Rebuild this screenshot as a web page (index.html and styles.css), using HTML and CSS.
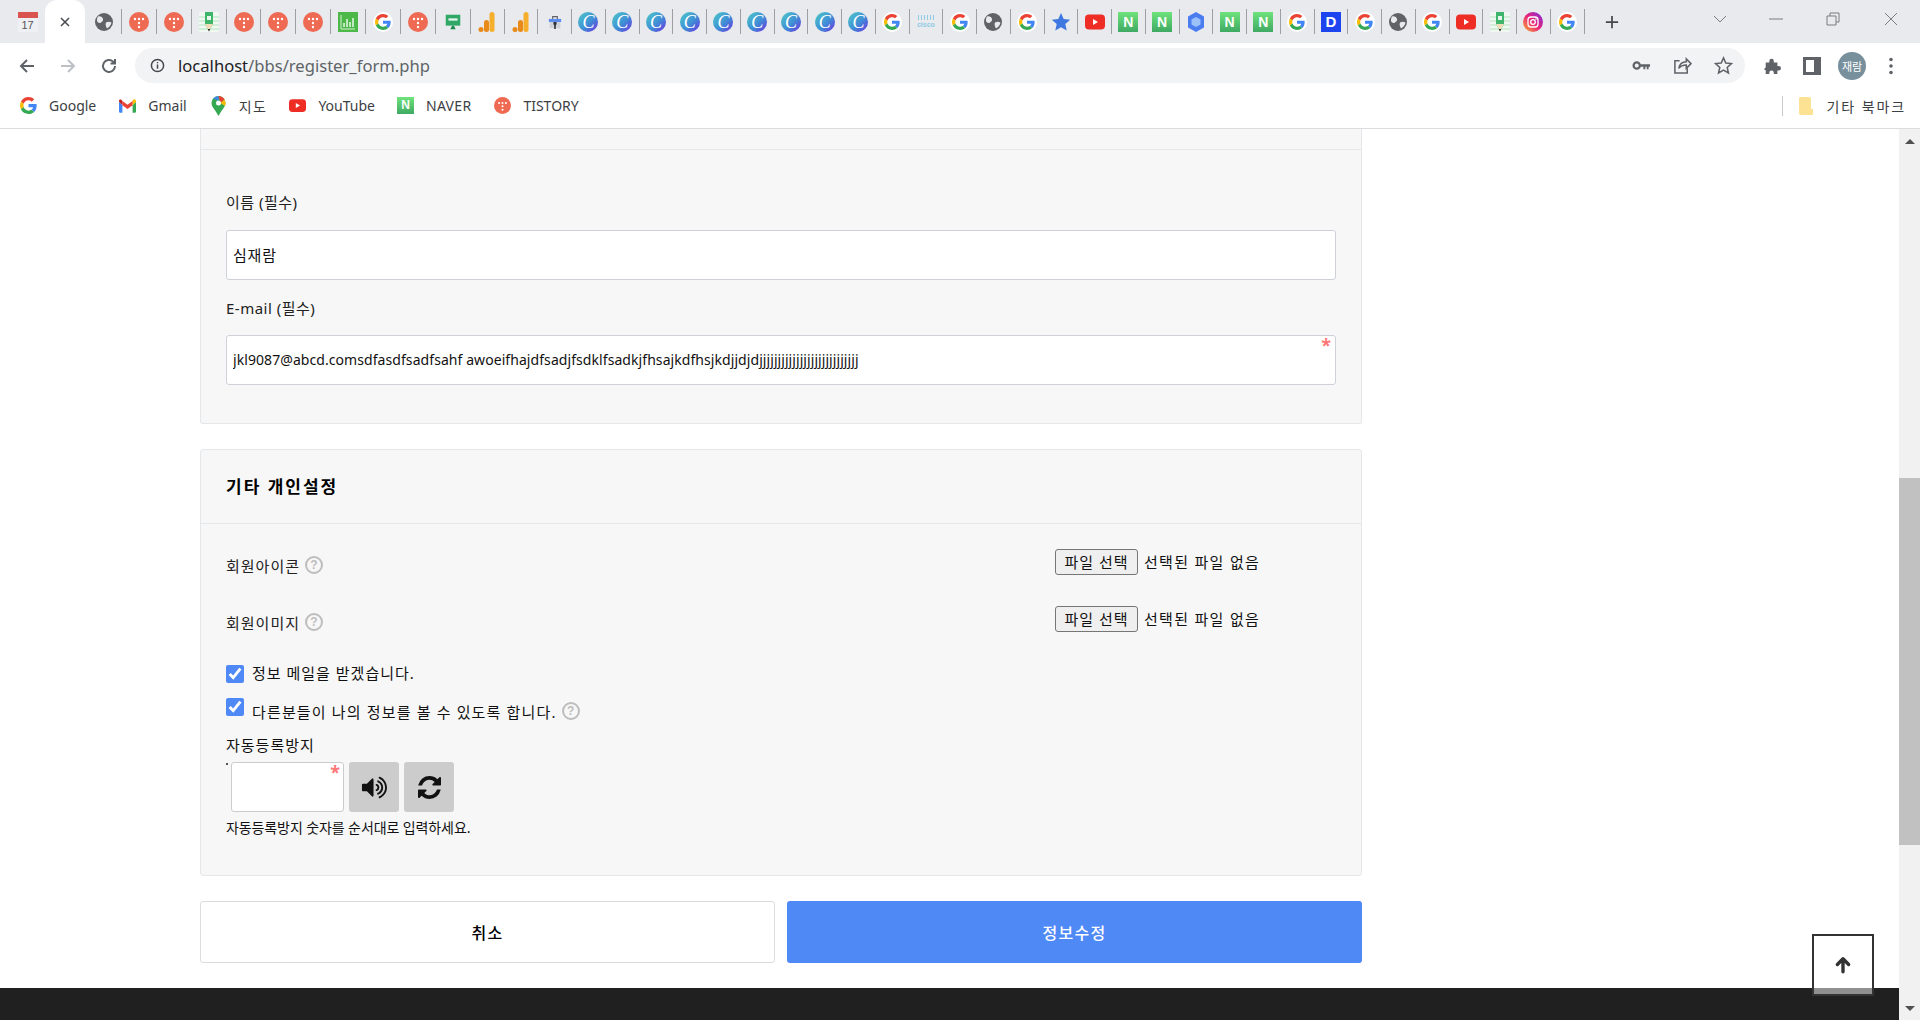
FILE: index.html
```html
<!DOCTYPE html>
<html lang="ko">
<head>
    <meta charset="UTF-8">
    <meta name="viewport" content="width=device-width, initial-scale=1.0">
    <title>회원 정보 수정</title>
    <link rel="stylesheet" href="styles.css">
</head>
<body>
    <!-- favicon and toolbar icon set -->
    <svg class="sprite" xmlns="http://www.w3.org/2000/svg">
        <defs>
            <linearGradient id="g-insta" x1="0" y1="1" x2="1" y2="0"><stop offset="0" stop-color="#fdb32b"/><stop offset=".5" stop-color="#e8247c"/><stop offset="1" stop-color="#7a2ee0"/></linearGradient>
        </defs>
        <symbol id="i-g" viewBox="-6 -6 60 60"><circle cx="24" cy="24" r="30" fill="#fff"/><path fill="#EA4335" d="M24 9.5c3.54 0 6.71 1.22 9.21 3.6l6.85-6.85C35.9 2.38 30.47 0 24 0 14.62 0 6.51 5.38 2.56 13.22l7.98 6.19C12.43 13.72 17.74 9.5 24 9.5z"/><path fill="#4285F4" d="M46.98 24.55c0-1.57-.15-3.09-.38-4.55H24v9.02h12.94c-.58 2.96-2.26 5.48-4.78 7.18l7.73 6c4.51-4.18 7.09-10.36 7.09-17.65z"/><path fill="#FBBC05" d="M10.53 28.59c-.5-1.45-.78-2.99-.78-4.59s.27-3.14.78-4.59l-7.98-6.19C.92 16.46 0 20.12 0 24c0 3.88.92 7.54 2.56 10.78l7.97-6.19z"/><path fill="#34A853" d="M24 48c6.48 0 11.93-2.13 16.01-5.81l-7.73-6c-2.15 1.45-4.92 2.3-8.28 2.3-6.26 0-11.57-4.22-13.47-9.91l-7.98 6.19C6.51 42.62 14.62 48 24 48z"/></symbol>
        <symbol id="i-g-plain" viewBox="0 0 48 48"><path fill="#EA4335" d="M24 9.5c3.54 0 6.71 1.22 9.21 3.6l6.85-6.85C35.9 2.38 30.47 0 24 0 14.62 0 6.51 5.38 2.56 13.22l7.98 6.19C12.43 13.72 17.74 9.5 24 9.5z"/><path fill="#4285F4" d="M46.98 24.55c0-1.57-.15-3.09-.38-4.55H24v9.02h12.94c-.58 2.96-2.26 5.48-4.78 7.18l7.73 6c4.51-4.18 7.09-10.36 7.09-17.65z"/><path fill="#FBBC05" d="M10.53 28.59c-.5-1.45-.78-2.99-.78-4.59s.27-3.14.78-4.59l-7.98-6.19C.92 16.46 0 20.12 0 24c0 3.88.92 7.54 2.56 10.78l7.97-6.19z"/><path fill="#34A853" d="M24 48c6.48 0 11.93-2.13 16.01-5.81l-7.73-6c-2.15 1.45-4.92 2.3-8.28 2.3-6.26 0-11.57-4.22-13.47-9.91l-7.98 6.19C6.51 42.62 14.62 48 24 48z"/></symbol>
        <symbol id="i-t" viewBox="0 0 20 20"><circle cx="10" cy="10" r="10" fill="#ef6a53"/><g fill="#fff"><circle cx="6" cy="7" r="1.2"/><circle cx="10" cy="7" r="1.2"/><circle cx="14" cy="7" r="1.2"/><circle cx="10" cy="11" r="1.2"/><circle cx="10" cy="15" r="1.2"/></g></symbol>
        <symbol id="i-globe" viewBox="0 0 20 20"><circle cx="10" cy="10" r="9" fill="#5f6368"/><path fill="#e8eaed" d="M4 4.500c2.500-.5 4.500.5 5 2.500s-1 2.500-2 3.500-2.500.5-3.500-.5-.5-4 .5-5.500zm8 6c2-1 3.500-1 5.500 0-.5 2.500-2 4.500-4.500 6-1-2-2-4-1-6z"/></symbol>
        <symbol id="i-pencil" viewBox="0 0 20 20"><rect width="20" height="20" rx="2" fill="#f1f8f1"/><path d="M0 5h20M0 9h20M0 13h20M0 17h20" stroke="#c6eccf" stroke-width="1.5"/><path d="M6 0h8v12l-4 7-4-7z" fill="#3fb56b"/><rect x="8" y="4" width="4" height="4" fill="#e8f7ec"/><path d="M6 12h8l-4 7z" fill="#f3dcb8"/><path d="M8.8 17h2.4L10 19.5z" fill="#222"/></symbol>
        <symbol id="i-chart" viewBox="0 0 20 20"><rect width="20" height="20" fill="#4cb848"/><path d="M3 3v14h14" fill="none" stroke="#d4f0d2" stroke-width="1"/><path d="M6 15v-4M9 15V7M12 15v-5M15 15V6" stroke="#e8f7e7" stroke-width="1.5"/></symbol>
        <symbol id="i-monitor" viewBox="-1 -1 22 22"><rect x="2" y="2" width="16" height="12" fill="#2fa866"/><rect x="5" y="6" width="10" height="2.5" fill="#e6f6ec"/><path d="M7 18l2-4h2l2 4z" fill="#1f8a50"/></symbol>
        <symbol id="i-analytics" viewBox="0 0 20 20"><rect x="12.500" y="0" width="5" height="20" rx="2.500" fill="#f6ae2d"/><rect x="7" y="8" width="5" height="12" rx="2.500" fill="#e88a1a"/><circle cx="4" cy="17.500" r="2.500" fill="#e88a1a"/></symbol>
        <symbol id="i-toolbox" viewBox="-3 -3 26 26"><path d="M7 6V3h6v3" fill="none" stroke="#5f6368" stroke-width="1.5"/><rect x="2" y="6" width="16" height="4" fill="#5b8def"/><rect x="3" y="10" width="14" height="8" fill="#cfd3d8"/><path d="M8 10v3l2 2 2-2v-3" fill="#2b2f36"/><path d="M10 14v5" stroke="#2b2f36" stroke-width="2"/></symbol>
        <symbol id="i-star" viewBox="0 0 20 20"><path d="M10 1l2.700 6 6.500.7-4.900 4.400 1.400 6.400L10 15.200l-5.700 3.300 1.400-6.400L.8 7.700l6.500-.7z" fill="#3f78e0"/></symbol>
        <symbol id="i-yt" viewBox="0 0 20 20"><rect y="2.500" width="20" height="15" rx="4" fill="#ee2d24"/><path d="M8 7l5 3-5 3z" fill="#fff"/></symbol>
        <symbol id="i-hex" viewBox="0 0 20 20"><path d="M10 0l8 4.500v11L10 20l-8-4.500v-11z" fill="#4c7df0"/><path d="M10 5l4.500 2.500v5L10 15l-4.500-2.500v-5z" fill="#9cc0f8"/></symbol>
        <symbol id="i-insta" viewBox="0 0 20 20"><circle cx="10" cy="10" r="10" fill="url(#g-insta)"/><rect x="5" y="5" width="10" height="10" rx="3" fill="none" stroke="#fff" stroke-width="1.300"/><circle cx="10" cy="10" r="2.300" fill="none" stroke="#fff" stroke-width="1.300"/><circle cx="13" cy="7" r=".8" fill="#fff"/></symbol>
        <symbol id="i-gmail" viewBox="0 0 20 16"><path d="M0 3v11.500A1.500 1.500 0 0 0 1.500 16H4V7z" fill="#4285f4"/><path d="M16 7v9h2.500a1.500 1.500 0 0 0 1.500-1.500V3z" fill="#34a853"/><path d="M16 1v6l4-4V2c0-1.500-2-2.500-3-1.500z" fill="#fbbc04"/><path d="M4 7V2l6 4.500L16 2v5l-6 4.500z" fill="#ea4335"/><path d="M0 2v1l4 4V2L3 1C2 0 0 .5 0 2z" fill="#c5221f"/></symbol>
        <symbol id="i-maps" viewBox="0 0 14 20"><path d="M7 0a7 7 0 0 1 7 7c0 4-4 7-7 13C4 14 0 11 0 7a7 7 0 0 1 7-7z" fill="#34a853"/><path d="M2 2.500A7 7 0 0 1 7 0v5z" fill="#4285f4"/><path d="M7 0a7 7 0 0 1 6 3.500L9 7z" fill="#ea4335"/><path d="M13 3.500A7 7 0 0 1 13.500 10L9 7z" fill="#fbbc04"/><circle cx="7" cy="7" r="2.500" fill="#fff"/></symbol>
    </svg>

    <header class="browser">
        <div class="tabstrip">
            <div class="tab tab-pinned"><span class="fav fav-cal">17</span></div>
            <div class="tab-active">
                <svg class="tab-close" viewBox="0 0 12 12"><path d="M2 2l8 8M10 2l-8 8"/></svg>
            </div>
            <div class="tab"><svg class="fav"><use href="#i-globe"/></svg></div>
            <div class="tab"><svg class="fav"><use href="#i-t"/></svg></div>
            <div class="tab"><svg class="fav"><use href="#i-t"/></svg></div>
            <div class="tab"><svg class="fav"><use href="#i-pencil"/></svg></div>
            <div class="tab"><svg class="fav"><use href="#i-t"/></svg></div>
            <div class="tab"><svg class="fav"><use href="#i-t"/></svg></div>
            <div class="tab"><svg class="fav"><use href="#i-t"/></svg></div>
            <div class="tab"><svg class="fav"><use href="#i-chart"/></svg></div>
            <div class="tab"><svg class="fav"><use href="#i-g"/></svg></div>
            <div class="tab"><svg class="fav"><use href="#i-t"/></svg></div>
            <div class="tab"><svg class="fav"><use href="#i-monitor"/></svg></div>
            <div class="tab"><svg class="fav"><use href="#i-analytics"/></svg></div>
            <div class="tab"><svg class="fav"><use href="#i-analytics"/></svg></div>
            <div class="tab"><svg class="fav"><use href="#i-toolbox"/></svg></div>
            <div class="tab"><span class="fav fav-c">C</span></div>
            <div class="tab"><span class="fav fav-c">C</span></div>
            <div class="tab"><span class="fav fav-c">C</span></div>
            <div class="tab"><span class="fav fav-c">C</span></div>
            <div class="tab"><span class="fav fav-c">C</span></div>
            <div class="tab"><span class="fav fav-c">C</span></div>
            <div class="tab"><span class="fav fav-c">C</span></div>
            <div class="tab"><span class="fav fav-c">C</span></div>
            <div class="tab"><span class="fav fav-c">C</span></div>
            <div class="tab"><svg class="fav"><use href="#i-g"/></svg></div>
            <div class="tab"><span class="fav fav-cisco">cisco</span></div>
            <div class="tab"><svg class="fav"><use href="#i-g"/></svg></div>
            <div class="tab"><svg class="fav"><use href="#i-globe"/></svg></div>
            <div class="tab"><svg class="fav"><use href="#i-g"/></svg></div>
            <div class="tab"><svg class="fav"><use href="#i-star"/></svg></div>
            <div class="tab"><svg class="fav"><use href="#i-yt"/></svg></div>
            <div class="tab"><span class="fav fav-n">N</span></div>
            <div class="tab"><span class="fav fav-n">N</span></div>
            <div class="tab"><svg class="fav"><use href="#i-hex"/></svg></div>
            <div class="tab"><span class="fav fav-n">N</span></div>
            <div class="tab"><span class="fav fav-n">N</span></div>
            <div class="tab"><svg class="fav"><use href="#i-g"/></svg></div>
            <div class="tab"><span class="fav fav-d">D</span></div>
            <div class="tab"><svg class="fav"><use href="#i-g"/></svg></div>
            <div class="tab"><svg class="fav"><use href="#i-globe"/></svg></div>
            <div class="tab"><svg class="fav"><use href="#i-g"/></svg></div>
            <div class="tab"><svg class="fav"><use href="#i-yt"/></svg></div>
            <div class="tab"><svg class="fav"><use href="#i-pencil"/></svg></div>
            <div class="tab"><svg class="fav"><use href="#i-insta"/></svg></div>
            <div class="tab"><svg class="fav"><use href="#i-g"/></svg></div>
            <svg class="new-tab" viewBox="0 0 16 16"><path d="M8 1v14M1 8h14"/></svg>
            <div class="window-controls">
                <svg class="win-icon win-chevron" viewBox="0 0 14 8"><path d="M1 1l6 6 6-6"/></svg>
                <svg class="win-icon win-min" viewBox="0 0 14 14"><path d="M0 7h14"/></svg>
                <svg class="win-icon win-restore" viewBox="0 0 14 14"><path d="M1 4h9v9H1zM4 4V1h9v9h-3"/></svg>
                <svg class="win-icon win-x" viewBox="0 0 14 14"><path d="M1 1l12 12M13 1L1 13"/></svg>
            </div>
        </div>

        <div class="toolbar">
            <svg class="nav-icon" viewBox="0 0 18 18"><path d="M16 9H3M9 3L3 9l6 6"/></svg>
            <svg class="nav-icon nav-disabled" viewBox="0 0 18 18"><path d="M2 9h13M9 3l6 6-6 6"/></svg>
            <svg class="nav-icon" viewBox="0 0 18 18"><path d="M15 9a6 6 0 1 1-1.800-4.300L15 6.500M15 2v4.500h-4.500"/></svg>
            <div class="omnibox">
                <svg class="info-icon" viewBox="0 0 16 16"><circle cx="8" cy="8" r="6.500"/><path d="M8 7v4.500M8 4.200v1.400"/></svg>
                <span class="url"><span class="url-host">localhost</span>/bbs/register_form.php</span>
                <div class="omnibox-actions">
                    <svg class="omni-icon" viewBox="0 0 20 12"><circle cx="5" cy="6" r="3.300" fill="none" stroke="#5f6368" stroke-width="2.400"/><path d="M9 4.800h10v2.500h-1.500V10h-2V7.300h-1.500V10h-2V7.300H9z" fill="#5f6368"/></svg>
                    <svg class="omni-icon omni-line" viewBox="0 0 20 20"><path d="M7 5H2v13h13v-5"/><path d="M6 13c1-5 4-7 8-7V3l5 5-5 5V9.500c-3 0-6 1-8 3.500z"/></svg>
                    <svg class="omni-icon omni-line" viewBox="0 0 20 20"><path d="M10 2l2.400 5.400 5.900.6-4.400 4 1.300 5.800L10 14.800l-5.200 3 1.300-5.800-4.400-4 5.900-.6z"/></svg>
                </div>
            </div>
            <svg class="tool-icon tool-puzzle" viewBox="0 0 20 20"><path d="M3 6h4V4.500a2.500 2.500 0 0 1 5 0V6h4v4h1.500a2.500 2.500 0 0 1 0 5H16v4h-4v-1.500a2.500 2.500 0 0 0-5 0V19H3v-4.500H1.500V14a2.500 2.500 0 0 1 2-2.500H3z" fill="#5f6368"/></svg>
            <svg class="tool-icon tool-panel" viewBox="0 0 18 18"><rect x="1.500" y="1.500" width="15" height="15" fill="none" stroke="#5f6368" stroke-width="3"/><rect x="11" y="1" width="6" height="16" fill="#5f6368"/></svg>
            <div class="avatar">재람</div>
            <svg class="tool-icon tool-kebab" viewBox="0 0 4 18"><circle cx="2" cy="2.500" r="1.800"/><circle cx="2" cy="9" r="1.800"/><circle cx="2" cy="15.500" r="1.800"/></svg>
        </div>

        <div class="bookmarks">
            <a class="bookmark"><svg class="bm-icon"><use href="#i-g-plain"/></svg>Google</a>
            <a class="bookmark"><svg class="bm-icon bm-gmail"><use href="#i-gmail"/></svg>Gmail</a>
            <a class="bookmark bm-item-maps"><svg class="bm-icon bm-maps"><use href="#i-maps"/></svg>지도</a>
            <a class="bookmark bm-item-yt"><svg class="bm-icon"><use href="#i-yt"/></svg>YouTube</a>
            <a class="bookmark bm-item-naver"><span class="fav-n bm-n">N</span><span class="bm-naver">NAVER</span></a>
            <a class="bookmark"><svg class="bm-icon"><use href="#i-t"/></svg>TISTORY</a>
            <div class="other-bookmarks">
                <svg class="bm-folder" viewBox="0 0 14 18"><path d="M1 0h9a2 2 0 0 1 2 2v10h2v6H2a2 2 0 0 1-2-2V1z" fill="#fde293"/></svg>
                <span class="other-label">기타 북마크</span>
            </div>
        </div>
    </header>

    <div class="viewport">
        <main class="page">
            <div class="wrap">
                <section class="panel panel-clipped">
                    <div class="panel-head panel-head-cut"></div>
                    <div class="panel-body">
                        <label class="field-label">이름 (필수)</label>
                        <input class="text-input text-input-name" type="text" value="심재람">
                        <label class="field-label field-label-next">E-mail (필수)</label>
                        <div class="required">
                            <input class="text-input text-input-mail" type="text" value="jkl9087@abcd.comsdfasdfsadfsahf awoeifhajdfsadjfsdklfsadkjfhsajkdfhsjkdjjdjdjjjjjjjjjjjjjjjjjjjjjjjjjjj">
                        </div>
                    </div>
                </section>

                <section class="panel panel-settings">
                    <div class="panel-head"><h2>기타 개인설정</h2></div>
                    <div class="settings-body">
                        <div class="file-row">
                            <span class="file-label">회원아이콘 <span class="help">?</span></span>
                            <span class="file-pick"><button class="file-btn" type="button">파일 선택</button><span class="file-none">선택된 파일 없음</span></span>
                        </div>
                        <div class="file-row">
                            <span class="file-label">회원이미지 <span class="help">?</span></span>
                            <span class="file-pick"><button class="file-btn" type="button">파일 선택</button><span class="file-none">선택된 파일 없음</span></span>
                        </div>
                        <label class="check-row check-first">
                            <input type="checkbox" checked>
                            <span>정보 메일을 받겠습니다.</span>
                        </label>
                        <label class="check-row check-second">
                            <input type="checkbox" checked>
                            <span>다른분들이 나의 정보를 볼 수 있도록 합니다.</span>
                            <span class="help">?</span>
                        </label>
                        <div class="captcha-label">자동등록방지</div>
                        <div class="captcha-row">
                            <span class="captcha-dot"></span>
                            <div class="required required-small"><input class="captcha-input" type="text"></div>
                            <button class="captcha-btn" type="button">
                                <svg viewBox="0 0 1792 1792"><path d="M832 352v1088q0 26-19 45t-45 19-45-19l-333-333h-262q-26 0-45-19t-19-45v-384q0-26 19-45t45-19h262l333-333q19-19 45-19t45 19 19 45zm384 544q0 76-42.500 141.500t-112.500 93.500q-10 5-25 5-26 0-45-18.500t-19-45.500q0-21 12-35.500t29-25 34-23 29-36 12-56.500-12-56.500-29-36-34-23-29-25-12-35.500q0-27 19-45.500t45-18.500q15 0 25 5 70 27 112.500 93t42.500 142zm256 0q0 153-85 282.500t-225 188.500q-13 5-25 5-27 0-46-19t-19-45q0-39 39-59 56-29 76-44 74-54 115.500-135.500t41.500-173.500-41.500-173.500-115.500-135.500q-20-15-76-44-39-20-39-59 0-26 19-45t45-19q13 0 26 5 140 59 225 188.500t85 282.500zm256 0q0 230-127 422.500t-338 283.500q-13 5-26 5-26 0-45-19t-19-45q0-36 39-59 7-4 22.500-10.500t22.500-10.500q46-25 82-51 123-91 192-227t69-289-69-289-192-227q-36-26-82-51-7-4-22.500-10.500t-22.500-10.500q-39-23-39-59 0-26 19-45t45-19q13 0 26 5 211 91 338 283.500t127 422.500z"/></svg>
                            </button>
                            <button class="captcha-btn captcha-refresh" type="button">
                                <svg viewBox="0 0 1536 1536"><path d="M1511 928q0 5-1 7-64 268-268 434.500t-478 166.500q-146 0-282.500-55t-243.500-157l-129 129q-19 19-45 19t-45-19-19-45v-448q0-26 19-45t45-19h448q26 0 45 19t19 45-19 45l-137 137q71 66 161 102t187 36q134 0 250-65t186-179q11-17 53-117 8-23 30-23h192q13 0 22.500 9.500t9.500 22.500zm25-800v448q0 26-19 45t-45 19h-448q-26 0-45-19t-19-45 19-45l138-138q-148-137-349-137-134 0-250 65t-186 179q-11 17-53 117-8 23-30 23h-199q-13 0-22.500-9.500t-9.500-22.500v-7q65-268 270-434.500t480-166.500q146 0 284 55.500t245 156.500l130-129q19-19 45-19t45 19 19 45z"/></svg>
                            </button>
                        </div>
                        <p class="captcha-hint">자동등록방지 숫자를 순서대로 입력하세요.</p>
                    </div>
                </section>

                <div class="actions">
                    <a class="btn btn-cancel">취소</a>
                    <button class="btn btn-submit" type="button">정보수정</button>
                </div>
            </div>
            <footer class="footer"></footer>
        </main>

        <div class="scrollbar">
            <span class="scroll-up"></span>
            <span class="scroll-thumb"></span>
            <span class="scroll-down"></span>
        </div>
    </div>

    <button class="to-top" type="button">
        <svg viewBox="0 0 16 16"><path d="M8 14V3M3 7.500L8 2.500l5 5"/></svg>
    </button>
</body>
</html>
```

FILE: styles.css
```css
:root {
    --chrome-bg: #e8eaed;
    --omni-bg: #f1f3f4;
    --icon: #5f6368;
    --panel-bg: #f7f7f7;
    --panel-line: #e4e8eb;
    --blue: #4f89f6;
}

* {
    box-sizing: border-box;
}

html, body {
    height: 100%;
}

body {
    margin: 0;
    display: flex;
    flex-direction: column;
    overflow: hidden;
    background: #fff;
    color: #111;
    font-family: "Noto Sans", "Noto Sans CJK KR", sans-serif;
    font-size: 14px;
}

/* kept in the layout with no size, gradients stop working under display: none */
.sprite {
    flex: none;
    width: 0;
    height: 0;
}

/* browser chrome */
.browser {
    flex: none;
}

.tabstrip {
    display: flex;
    align-items: center;
    height: 43px;
    padding-left: 10px;
    background: var(--chrome-bg);
}

.tab {
    flex: none;
    display: flex;
    align-items: center;
    justify-content: center;
    width: 33.76px;
    height: 25px;
    border-right: 1px solid #9aa0a6;
}

/* the first eleven background tabs sit a little wider apart */
.tab:nth-child(-n+13) {
    width: 34.9px;
}

.tab.tab-pinned {
    width: 35px;
    border-right: 0;
}

.tab-active {
    flex: none;
    align-self: stretch;
    display: flex;
    align-items: center;
    justify-content: center;
    width: 40px;
    margin-right: 2px;
    background: #fff;
    border-radius: 12px 12px 0 0;
}

.tab-close {
    width: 12px;
    height: 12px;
    fill: none;
    stroke: #45494d;
    stroke-width: 1.5;
}

.fav {
    flex: none;
    display: flex;
    align-items: center;
    justify-content: center;
    width: 20px;
    height: 20px;
    line-height: 20px;
}

.fav-c {
    border-radius: 50%;
    background: linear-gradient(135deg, #4fc9c6, #3f8fd6 55%, #6a2fe0);
    color: #fff;
    font: italic 400 18px/20px "Liberation Serif", serif;
}

.fav-n, .bm-n {
    background: linear-gradient(#6fe37c, #3fa963);
    color: #fff;
    font: 900 14px/20px "Liberation Sans", sans-serif;
}

.fav-d {
    background: #1c45f0;
    color: #fff;
    font: 700 15px/20px "Liberation Sans", sans-serif;
}

.fav-cal {
    padding-top: 6px;
    background: linear-gradient(#d9534f 6px, #eef0f3 6px);
    color: #555;
    font: 400 11px/14px "Liberation Sans", sans-serif;
}

.fav-cisco {
    padding-top: 6px;
    background: repeating-linear-gradient(90deg, #8fcbe6 0 1px, transparent 1px 3px) center 3px / 16px 5px no-repeat;
    color: #8fcbe6;
    font: 700 7px/12px "Liberation Sans", sans-serif;
}

.new-tab {
    flex: none;
    width: 14px;
    height: 14px;
    margin-left: 20px;
    fill: none;
    stroke: #45494d;
    stroke-width: 2;
}

.window-controls {
    display: flex;
    align-items: center;
    margin-left: auto;
    height: 100%;
    padding-bottom: 6px;
}

.win-icon {
    width: 14px;
    height: 14px;
    fill: none;
    stroke: #7a7d82;
    stroke-width: 1;
}

.win-chevron { margin-right: 42px; height: 8px; }
.win-min { margin-right: 43px; }
.win-restore { margin-right: 44px; }
.win-x { margin-right: 22px; }

.toolbar {
    display: flex;
    align-items: center;
    height: 42px;
    padding: 3px 0 0 18px;
    background: #fff;
}

.nav-icon {
    flex: none;
    width: 18px;
    height: 18px;
    margin-right: 23px;
    fill: none;
    stroke: var(--icon);
    stroke-width: 2;
}

.nav-disabled {
    stroke: #bdc1c6;
}

.omnibox {
    flex: none;
    display: flex;
    align-items: center;
    width: 1610px;
    height: 35px;
    margin-left: -6px;
    padding-left: 15px;
    background: var(--omni-bg);
    border-radius: 18px;
}

.info-icon {
    flex: none;
    width: 15px;
    height: 15px;
    margin-right: 13px;
    fill: none;
    stroke: #45494d;
    stroke-width: 1.6;
}

.url {
    font-size: 16.6px;
    color: var(--icon);
}

.url-host {
    color: #202124;
}

.omnibox-actions {
    display: flex;
    align-items: center;
    gap: 22px;
    margin-left: auto;
    padding-right: 12px;
}

.omni-icon {
    width: 19px;
    height: 19px;
}

.omni-line {
    fill: none;
    stroke: var(--icon);
    stroke-width: 1.6;
}

.tool-icon {
    flex: none;
    width: 18px;
    height: 18px;
}

.tool-puzzle { margin-left: 18px; }
.tool-panel { margin-left: 22px; }

.tool-kebab {
    width: 4px;
    margin-left: 23px;
    fill: var(--icon);
}

.avatar {
    flex: none;
    display: flex;
    align-items: center;
    justify-content: center;
    width: 28px;
    height: 28px;
    margin-left: 17px;
    border-radius: 50%;
    background: #78909c;
    color: #fff;
    font-size: 11px;
}

.bookmarks {
    display: flex;
    align-items: center;
    height: 44px;
    padding: 0 0 2px 20px;
    background: #fff;
    border-bottom: 1px solid #dadce0;
    font-size: 14px;
    color: #3c4043;
}

.bookmark {
    display: flex;
    align-items: center;
    gap: 12px;
    margin-right: 23px;
}

.bm-icon {
    flex: none;
    width: 17px;
    height: 17px;
}

.bm-gmail { height: 14px; }
.bm-maps { height: 20px; }

.bm-n {
    flex: none;
    display: flex;
    align-items: center;
    justify-content: center;
    width: 17px;
    height: 17px;
    font-size: 12px;
    line-height: 17px;
}

.bm-item-maps {
    letter-spacing: 1.5px;
    margin-right: 22px;
}

.bm-item-yt {
    margin-right: 22px;
}

.bm-naver {
    letter-spacing: 0.3px;
}

.other-bookmarks {
    display: flex;
    align-items: center;
    gap: 14px;
    height: 20px;
    margin-left: auto;
    margin-right: 14px;
    padding-left: 16px;
    border-left: 1px solid #c8cacd;
}

.other-label {
    letter-spacing: 1.9px;
}

.bm-folder {
    width: 14px;
    height: 18px;
}

/* page */
.viewport {
    flex: 1;
    display: flex;
    min-height: 0;
}

.page {
    flex: 1;
    display: flex;
    flex-direction: column;
    min-width: 0;
    overflow: hidden;
}

.wrap {
    width: 1162px;
    margin-left: 200px;
}

.panel {
    background: var(--panel-bg);
    border: 1px solid var(--panel-line);
    border-radius: 3px;
}

.panel-clipped {
    border-top: 0;
    border-radius: 0 0 3px 3px;
}

.panel-settings {
    margin-top: 25px;
}

.panel-head {
    display: flex;
    align-items: center;
    height: 74px;
    padding: 0 25px 2px;
    border-bottom: 1px solid var(--panel-line);
}

.panel-head-cut {
    height: 21px;
    padding: 0;
}

.panel-head h2 {
    margin: 0;
    font-size: 17px;
    font-weight: 700;
    letter-spacing: 2px;
    color: #000;
}

.panel-body {
    padding: 42px 25px 38px;
}

.field-label {
    display: block;
    height: 20px;
    margin-bottom: 18px;
    font-size: 15px;
    letter-spacing: 0.5px;
    line-height: 20px;
    color: #222;
}

.field-label-next {
    margin-top: 18px;
    margin-bottom: 17px;
}

.text-input {
    display: block;
    width: 100%;
    height: 50px;
    padding: 0 6px 2px;
    background: #fff;
    border: 1px solid #ced2d8;
    border-radius: 3px;
    color: #111;
    font: inherit;
}

.text-input-name {
    font-size: 15px;
    letter-spacing: 0.8px;
}

.text-input-mail {
    letter-spacing: 0.07px;
}

.required {
    position: relative;
}

.required::after {
    content: "*";
    position: absolute;
    top: 0;
    right: 5px;
    color: #f77;
    font-size: 18px;
    font-weight: 700;
    line-height: 1.200;
}

.required-small::after {
    right: 3px;
}

.settings-body {
    padding: 25px 25px 37px;
    font-size: 15px;
    letter-spacing: 1px;
}

.file-row {
    display: grid;
    grid-template-columns: 829px 1fr;
    height: 26px;
    margin-bottom: 31px;
}

.file-label {
    display: flex;
    align-items: center;
    gap: 5px;
    height: 20px;
    margin-top: 6px;
    color: #222;
}

.help {
    flex: none;
    display: flex;
    align-items: center;
    justify-content: center;
    width: 18px;
    height: 18px;
    border: 2px solid #bdbdbd;
    border-radius: 50%;
    color: #bdbdbd;
    font: 700 12px/14px "Liberation Sans", sans-serif;
    letter-spacing: 0;
}

.file-pick {
    display: flex;
    align-items: center;
    gap: 6px;
    color: #111;
}

.file-none {
    margin-bottom: 2px;
    letter-spacing: 1.3px;
}

.file-btn {
    width: 83px;
    height: 26px;
    padding: 0 0 2px;
    background: #efefef;
    border: 1px solid #767676;
    border-radius: 3px;
    color: #111;
    font: inherit;
    letter-spacing: inherit;
}

.check-row {
    display: flex;
    align-items: flex-start;
    gap: 8px;
    height: 20px;
}

.check-row input {
    flex: none;
    width: 18px;
    height: 18px;
    margin: 0;
    accent-color: var(--blue);
}

.check-first {
    margin-top: 33px;
}

.check-first span {
    line-height: 16px;
}

.check-second {
    margin-top: 13px;
    letter-spacing: 1.15px;
}

.check-second span {
    margin-top: 4px;
    line-height: 20px;
}

.check-second .help {
    margin: 4px 0 0 -3px;
    line-height: 14px;
}

.captcha-label {
    height: 20px;
    margin-top: 17px;
    line-height: 20px;
}

.captcha-row {
    display: flex;
    gap: 5px;
    height: 50px;
    margin-top: 7px;
}

.captcha-dot {
    flex: none;
    width: 2px;
    height: 2px;
    margin-top: 1px;
    margin-right: -2px;
    background: #555;
}

.captcha-input {
    display: block;
    width: 113px;
    height: 50px;
    background: #fff;
    border: 1px solid #ccc;
    border-radius: 3px;
}

.captcha-btn {
    display: flex;
    align-items: center;
    justify-content: center;
    width: 50px;
    height: 50px;
    padding: 0;
    background: #ccc;
    border: 0;
    border-radius: 3px;
}

.captcha-btn svg {
    width: 27px;
    height: 27px;
    fill: #111;
}

.captcha-refresh svg {
    width: 23px;
    height: 23px;
}

.captcha-hint {
    margin: 6px 0 0;
    font-size: 14px;
    letter-spacing: -0.1px;
    line-height: 20px;
}

.actions {
    display: grid;
    grid-template-columns: 1fr 1fr;
    gap: 12px;
    margin-top: 25px;
}

.btn {
    display: flex;
    align-items: center;
    justify-content: center;
    height: 62px;
    border-radius: 3px;
    font: inherit;
    font-size: 16px;
    font-weight: 500;
    letter-spacing: 1.3px;
}

.btn-cancel {
    background: #fff;
    border: 1px solid #dcdcdc;
    color: #000;
}

.btn-submit {
    background: var(--blue);
    border: 0;
    color: #fff;
}

.footer {
    flex: 1;
    margin-top: 25px;
    background: #202020;
}

/* scrollbar */
.scrollbar {
    flex: none;
    display: flex;
    flex-direction: column;
    align-items: center;
    width: 21px;
    background: #f1f1f1;
}

.scroll-up {
    width: 0;
    height: 0;
    margin-top: 10px;
    border: 5px solid transparent;
    border-top: 0;
    border-bottom-color: #505050;
}

.scroll-thumb {
    width: 100%;
    height: 367px;
    margin-top: 334px;
    background: #c1c1c1;
}

.scroll-down {
    width: 0;
    height: 0;
    margin-top: auto;
    margin-bottom: 9px;
    border: 5px solid transparent;
    border-bottom: 0;
    border-top-color: #505050;
}

/* floating top button */
.to-top {
    position: fixed;
    left: 1812px;
    top: 934px;
    display: flex;
    align-items: center;
    justify-content: center;
    width: 62px;
    height: 62px;
    padding: 0;
    background: rgba(255, 255, 255, 0.5);
    border: 2px solid #333;
}

.to-top svg {
    width: 18px;
    height: 18px;
    fill: none;
    stroke: #333;
    stroke-width: 3;
    stroke-linecap: round;
    stroke-linejoin: round;
}
```
